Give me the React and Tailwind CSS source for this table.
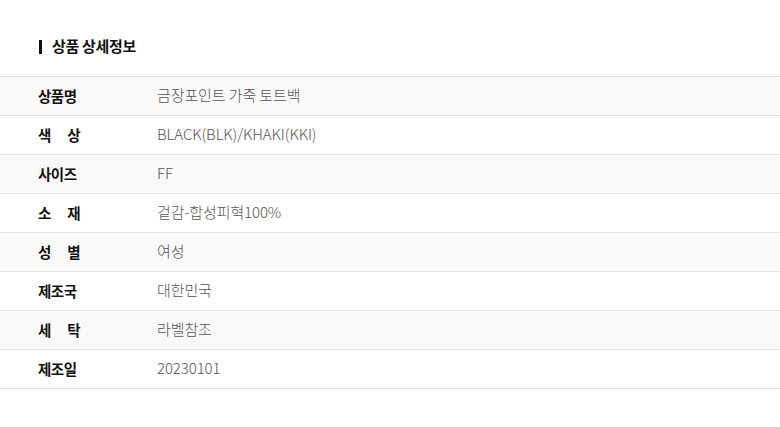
const rows = [
  { label: ["상품명"], value: "금장포인트 가죽 토트백" },
  { label: ["색", "상"], value: "BLACK(BLK)/KHAKI(KKI)" },
  { label: ["사이즈"], value: "FF" },
  { label: ["소", "재"], value: "겉감-합성피혁100%" },
  { label: ["성", "별"], value: "여성" },
  { label: ["제조국"], value: "대한민국" },
  { label: ["세", "탁"], value: "라벨참조" },
  { label: ["제조일"], value: "20230101" },
];

export default function App() {
  return (
    <div
      className="w-[780px] h-[427px] bg-white"
      style={{ fontFamily: '"Noto Sans CJK KR", "Noto Sans", sans-serif' }}
    >
      <div className="pt-[35px] px-[39px] flex items-center h-[58px]">
        <div className="w-[3px] h-[14px] bg-[#111]" />
        <h2 className="ml-[10px] text-[15px] font-bold text-[#111] tracking-[-0.3px]">
          상품 상세정보
        </h2>
      </div>
      <div className="mt-[18px] border-t border-[#e3e3e3]">
        {rows.map((row, i) => (
          <div
            key={i}
            className={`flex items-center h-[39px] pb-[1px] border-b border-[#e3e3e3] ${
              i % 2 === 0 ? "bg-[#f9f9f9]" : "bg-white"
            }`}
          >
            <div className="w-[157px] pl-[38px]">
              <div className="w-[42px] flex justify-between text-[14.5px] font-bold text-[#111] tracking-[-0.5px]">
                {row.label.map((c, j) => (
                  <span key={j}>{c}</span>
                ))}
              </div>
            </div>
            <div className="text-[15px] text-[#555] font-light tracking-[-0.1px]">{row.value}</div>
          </div>
        ))}
      </div>
    </div>
  );
}
